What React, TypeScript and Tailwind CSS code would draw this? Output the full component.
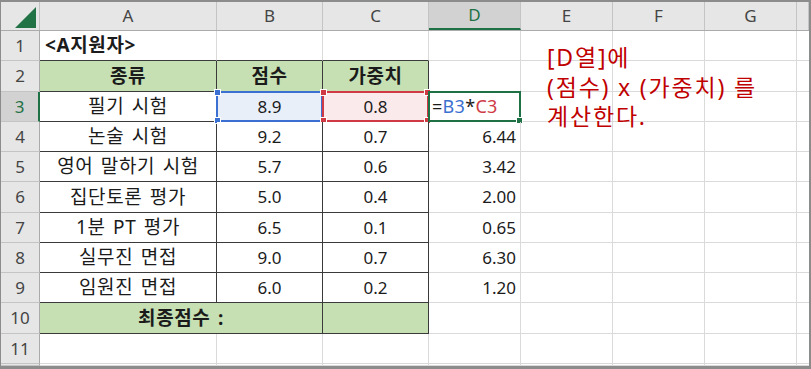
import React from "react";

const COLS = [177, 106, 106, 92, 92, 92, 92, 12];
const LETTERS = ["A", "B", "C", "D", "E", "F", "G", ""];
const ROWH = [30, 31, 30, 30, 30, 31, 30, 30, 30, 31, 30, 2];

type Row = { a?: string; b?: string; c?: string; d?: string };
const DATA: Row[] = [
  {},
  {},
  { a: "필기 시험", b: "8.9", c: "0.8" },
  { a: "논술 시험", b: "9.2", c: "0.7", d: "6.44" },
  { a: "영어 말하기 시험", b: "5.7", c: "0.6", d: "3.42" },
  { a: "집단토론 평가", b: "5.0", c: "0.4", d: "2.00" },
  { a: "1분 PT 평가", b: "6.5", c: "0.1", d: "0.65" },
  { a: "실무진 면접", b: "9.0", c: "0.7", d: "6.30" },
  { a: "임원진 면접", b: "6.0", c: "0.2", d: "1.20" },
  {},
  {},
  {},
];

const FONT = { fontFamily: '"Noto Sans", "Noto Sans CJK KR", sans-serif' };

function Handle({ pos, color }: { pos: string; color: string }) {
  return <div className={`absolute w-[7px] h-[7px] border border-white ${pos} ${color}`} />;
}

export default function App() {
  const headerCell = "h-full flex items-center justify-center border-r border-[#c4c4c4] text-[17px] text-[#444]";
  const ko = "text-[19px] tracking-[0.6px] [word-spacing:2px]";
  return (
    <div className="w-[811px] h-[369px] bg-white overflow-hidden" style={FONT}>
      <div className="relative w-[811px] h-[369px] border-t-2 border-l border-r-2 border-b-[3px] border-[#8c8c8c] flex flex-col">
        {/* Column header row */}
        <div className="flex h-[29px] shrink-0 bg-[#e6e6e6] border-b border-[#ababab]">
          <div className="w-[39px] h-full border-r border-[#c4c4c4] relative">
            <svg className="absolute left-[14px] top-[5px]" width="21" height="21" viewBox="0 0 21 21">
              <polygon points="0,21 21,21 21,0" fill="#217346" />
            </svg>
          </div>
          {COLS.map((w, i) => (
            <div
              key={i}
              style={{ width: w }}
              className={
                i === 3
                  ? "h-full flex items-center justify-center border-r border-[#c4c4c4] text-[17px] text-[#1e7145] bg-[#d2d2d2] border-b-2 border-b-[#1e7145]"
                  : headerCell
              }
            >
              {LETTERS[i]}
            </div>
          ))}
        </div>

        {ROWH.map((h, ri) => {
          const r = ri + 1;
          const d = DATA[ri];
          const isTable = r >= 2 && r <= 10;
          const rowHdr =
            r === 3
              ? "bg-[#d2d2d2] text-[#1e7145] border-r-2 border-r-[#1e7145]"
              : "bg-[#e6e6e6] text-[#444] border-r border-r-[#ababab]";
          const tcell = "border-r border-b border-[#3a3a3a]";
          const gcell = "border-r border-b border-[#dadada]";
          const green = r === 2 || r === 10 ? "bg-[#c6e0b4] font-bold" : "";
          const bFill = r === 3 ? "bg-[#e9eff9]" : green ? green : "bg-white";
          const cFill = r === 3 ? "bg-[#fbeaeb]" : green ? green : "bg-white";
          return (
            <div key={ri} className="flex shrink-0 text-[17px] text-[#1b1b1b]" style={{ height: h }}>
              <div className={`w-[39px] h-full flex items-center justify-center border-b border-b-[#c4c4c4] ${rowHdr}`}>
                {r <= 11 ? r : ""}
              </div>
              {/* A (and merged A:B on row 10) */}
              {r === 10 ? (
                <div className={`w-[283px] h-full flex items-center justify-center ${ko} ${tcell} ${green}`}>최종점수 :</div>
              ) : (
                <div
                  className={`w-[177px] h-full flex items-center ${ko} ${r === 1 ? "justify-start pl-[5px] font-bold border-r border-r-[#dadada] border-b border-b-[#3a3a3a]" : "justify-center"} ${
                    isTable ? `${tcell} ${green || "bg-white"}` : r === 1 ? "" : gcell
                  }`}
                >
                  {r === 1 ? "<A지원자>" : r === 2 ? "종류" : d.a}
                </div>
              )}
              {/* B */}
              {r !== 10 && (
                <div
                  className={`w-[106px] h-full flex items-center justify-center relative ${r === 2 ? ko : ""} ${
                    isTable ? `${tcell} ${bFill}` : r === 1 ? "border-r border-r-[#dadada] border-b border-b-[#3a3a3a]" : gcell
                  }`}
                >
                  {r === 2 ? "점수" : d.b}
                  {r === 3 && (
                    <div className="absolute -top-px -left-px w-[107px] h-[31px] border-2 border-[#3b6fd1]">
                      <Handle pos="-left-[4px] -top-[4px]" color="bg-[#3b6fd1]" />
                      <Handle pos="-left-[4px] -bottom-[4px]" color="bg-[#3b6fd1]" />
                    </div>
                  )}
                </div>
              )}
              {/* C */}
              <div
                className={`w-[106px] h-full flex items-center justify-center relative ${r === 2 ? ko : ""} ${
                  isTable ? `${tcell} ${cFill}` : r === 1 ? "border-r border-r-[#dadada] border-b border-b-[#3a3a3a]" : gcell
                }`}
              >
                {r === 2 ? "가중치" : d.c}
                {r === 3 && (
                  <div className="absolute -top-px -left-px w-[107px] h-[31px] border-2 border-[#cf3a45]">
                    <Handle pos="-left-[4px] -top-[4px]" color="bg-[#cf3a45]" />
                    <Handle pos="-left-[4px] -bottom-[4px]" color="bg-[#cf3a45]" />
                    <Handle pos="-right-[4px] -top-[4px]" color="bg-[#cf3a45]" />
                    <Handle pos="-right-[4px] -bottom-[4px]" color="bg-[#cf3a45]" />
                  </div>
                )}
              </div>
              {/* D */}
              <div className={`w-[92px] h-full flex items-center justify-end pr-[4px] relative ${gcell}`}>
                {r === 3 ? (
                  <>
                    <div className="absolute left-[3px] top-0 h-full flex items-center text-[18px] tracking-[0.3px]">
                      <span>=</span>
                      <span className="text-[#3b6fd1]">B3</span>
                      <span>*</span>
                      <span className="text-[#cf3a45]">C3</span>
                    </div>
                    <div className="absolute -top-px -left-px w-[93px] h-[31px] border-2 border-[#1e7145]">
                      <div className="absolute w-[7px] h-[7px] bg-[#1e7145] border border-white -right-[4px] -bottom-[4px]" />
                    </div>
                  </>
                ) : (
                  d.d
                )}
              </div>
              {[92, 92, 92].map((w, k) => (
                <div key={k} style={{ width: w }} className={`h-full ${gcell}`} />
              ))}
              <div className="w-[12px] h-full border-b border-[#dadada]" />
            </div>
          );
        })}

        <div className="absolute left-[546px] top-[41px] text-[23px] leading-[29.5px] tracking-[1.8px] text-[#c00000] whitespace-nowrap">
          <div>[D열]에</div>
          <div>(점수) x (가중치) 를</div>
          <div>계산한다.</div>
        </div>
      </div>
    </div>
  );
}
